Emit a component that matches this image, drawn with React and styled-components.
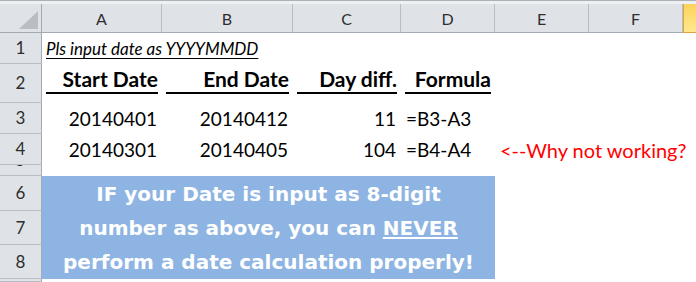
import React from "react";
import styled, { createGlobalStyle } from "styled-components";

const GlobalStyle = createGlobalStyle`
  html, body { margin: 0; padding: 0; background: #fff; }
  body {
    width: 696px;
    height: 282px;
    overflow: hidden;
    font-family: Lato, "Open Sans", sans-serif;
  }
  * { box-sizing: border-box; }
`;

const COLS = "42px 120px 131px 108px 94px 94px 94px 1fr";

const Sheet = styled.div`
  display: flex;
  flex-direction: column;
  width: 696px;
  height: 282px;
  overflow: hidden;
`;

const TopStrip = styled.div`
  height: 4px;
  border-top: 1px solid #aab0b7;
  background: #eef0f2;
`;

const Row = styled.div`
  display: grid;
  grid-template-columns: ${COLS};
  height: ${(p) => p.$h}px;
`;

const Corner = styled.div`
  display: flex;
  align-items: flex-end;
  justify-content: flex-end;
  padding: 0 3px 3px 0;
  background: #dfe3e8;
  border-right: 1px solid #a3aab2;
  border-bottom: 1px solid #a3aab2;
`;

const ColHead = styled.div`
  display: flex;
  align-items: center;
  justify-content: center;
  font-size: 16px;
  color: #2e2e2e;
  background: ${(p) =>
    p.$active ? "linear-gradient(#fcd35c, #ffe88e)" : "#dfe3e8"};
  border-left: ${(p) => (p.$active ? "1px solid #e2a33f" : "none")};
  border-right: ${(p) => (p.$active ? "none" : "1px solid #b8bec5")};
  border-bottom: 1px solid ${(p) => (p.$active ? "#e2a33f" : "#a3aab2")};
`;

const RowHeadStack = styled.div`
  display: flex;
  flex-direction: column;
`;

const RowHead = styled.div`
  display: flex;
  align-items: center;
  justify-content: center;
  height: ${(p) => (p.$h ? `${p.$h}px` : "auto")};
  overflow: hidden;
  font-size: 17px;
  color: #2e2e2e;
  background: #dfe3e8;
  border-right: 1px solid #a3aab2;
  border-bottom: 1px solid #b8bec5;
`;

const RowLabel = styled.span`
  display: block;
  line-height: 18px;
  transform: translateY(${(p) => p.$shift || 0}px);
`;

const Cell = styled.div`
  display: flex;
  align-items: center;
  justify-content: ${(p) => (p.$align === "right" ? "flex-end" : "flex-start")};
  padding: 0 5px;
  font-size: ${(p) => p.$size || 19}px;
  color: ${(p) => p.$color || "#000"};
  white-space: nowrap;
  overflow: visible;
  position: relative;
  z-index: 1;
`;

const Note = styled(Cell)`
  grid-column: 2 / span 4;
  padding-left: 4px;
  font-size: 17px;
  font-style: italic;
  text-decoration: underline;
  text-decoration-thickness: 1px;
  text-underline-offset: 3px;
`;

const TitleCell = styled.div`
  position: relative;
  display: flex;
  justify-content: flex-end;
  align-items: flex-start;
  padding: 2px 4px 0 0;
  font-size: 21px;
  font-weight: 700;
  color: #000;
  white-space: nowrap;

  &::after {
    content: "";
    position: absolute;
    left: 4px;
    right: 4px;
    bottom: 9px;
    height: 2px;
    background: #000;
  }
`;

const Callout = styled.div`
  grid-column: 2 / span 4;
  display: flex;
  flex-direction: column;
  background: #8db4e2;
  color: #fff;
  font-family: "DejaVu Sans", Verdana, sans-serif;
  font-weight: 700;
  font-size: 20px;
`;

const CalloutLine = styled.div`
  display: flex;
  align-items: center;
  justify-content: center;
  height: ${(p) => p.$h}px;
  white-space: nowrap;
`;

const Emphasis = styled.span`
  text-decoration: underline;
  text-decoration-thickness: 2px;
  text-underline-offset: 2px;
`;

const columns = ["A", "B", "C", "D", "E", "F"];

const dataRows = [
  { n: 3, start: "20140401", end: "20140412", diff: "11", formula: "=B3-A3" },
  {
    n: 4,
    start: "20140301",
    end: "20140405",
    diff: "104",
    formula: "=B4-A4",
    remark: "<--Why not working?",
  },
];

export default function App() {
  return (
    <>
      <GlobalStyle />
      <Sheet>
        <TopStrip />
        <Row $h={29}>
          <Corner>
            <svg width="19" height="18" viewBox="0 0 19 18">
              <polygon points="19,0 19,18 0,18" fill="#b9bec5" />
            </svg>
          </Corner>
          {columns.map((c) => (
            <ColHead key={c}>{c}</ColHead>
          ))}
          <ColHead $active />
        </Row>

        <Row $h={31}>
          <RowHead><RowLabel>1</RowLabel></RowHead>
          <Note>Pls input date as YYYYMMDD</Note>
        </Row>

        <Row $h={39}>
          <RowHead><RowLabel>2</RowLabel></RowHead>
          <TitleCell>Start Date</TitleCell>
          <TitleCell>End Date</TitleCell>
          <TitleCell>Day diff.</TitleCell>
          <TitleCell>Formula</TitleCell>
        </Row>

        {dataRows.map((r) => (
          <Row $h={31} key={r.n}>
            <RowHead><RowLabel>{r.n}</RowLabel></RowHead>
            <Cell $align="right">{r.start}</Cell>
            <Cell $align="right">{r.end}</Cell>
            <Cell $align="right">{r.diff}</Cell>
            <Cell>{r.formula}</Cell>
            {r.remark && (
              <Cell $color="#ff0000" $size={20}>
                {r.remark}
              </Cell>
            )}
          </Row>
        ))}

        <Row $h={11}>
          <RowHead><RowLabel $shift={-10}>5</RowLabel></RowHead>
        </Row>

        <Row $h={103}>
          <RowHeadStack>
            <RowHead $h={35}><RowLabel>6</RowLabel></RowHead>
            <RowHead $h={34}><RowLabel>7</RowLabel></RowHead>
            <RowHead $h={34}><RowLabel>8</RowLabel></RowHead>
          </RowHeadStack>
          <Callout>
            <CalloutLine $h={35}>IF your Date is input as 8-digit</CalloutLine>
            <CalloutLine $h={34}>
              number as above, you can&nbsp;<Emphasis>NEVER</Emphasis>
            </CalloutLine>
            <CalloutLine $h={34}>perform a date calculation properly!</CalloutLine>
          </Callout>
        </Row>

        <Row $h={3}>
          <RowHead />
        </Row>
      </Sheet>
    </>
  );
}
